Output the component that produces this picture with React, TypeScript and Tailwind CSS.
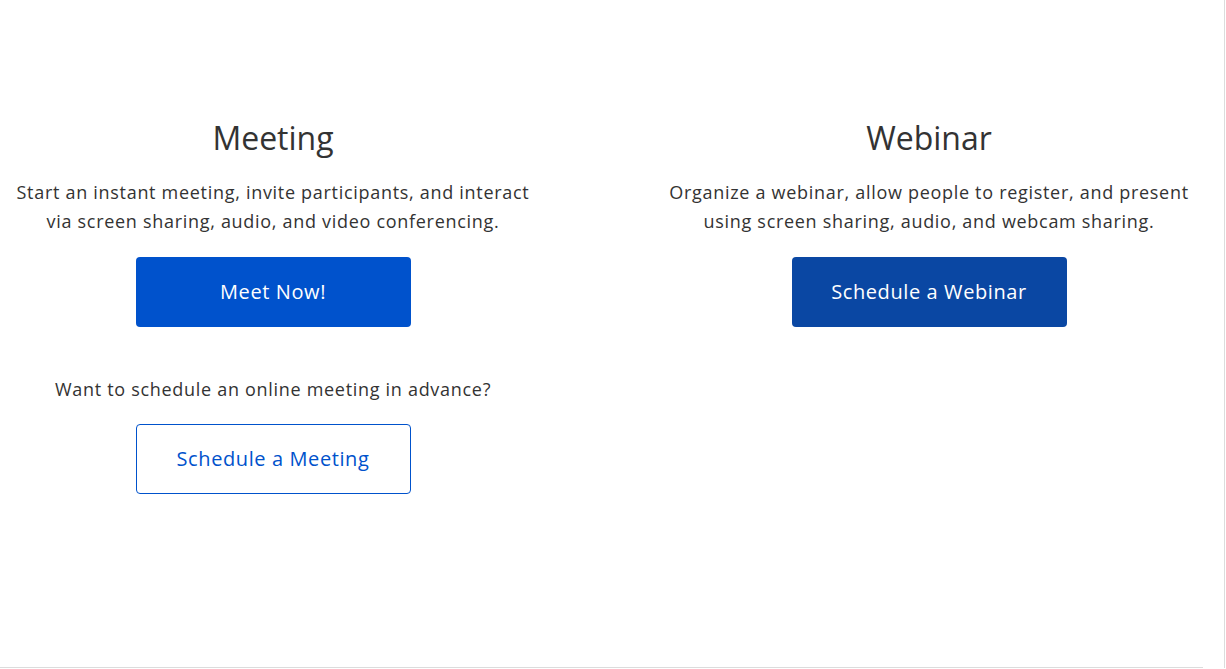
export default function App() {
  return (
    <div className="h-[669px] w-[1226px] bg-white" style={{ fontFamily: '"Open Sans", sans-serif' }}>
      <div className="flex h-[668px] w-[1225px] border-r border-[#dcdcdc]">
        <div className="flex h-full w-[1203px] flex-col border-b border-[#dcdcdc]">
          <div className="flex gap-[110px] pt-[119px] text-[#333333]">
            <div className="flex w-[546px] flex-col items-center text-center">
              <h1 className="text-[32px] leading-[38px]">Meeting</h1>
              <p className="mt-[21px] text-[18px] leading-[29px] tracking-[0.7px]">
                Start an instant meeting, invite participants, and interact
                <br />
                via screen sharing, audio, and video conferencing.
              </p>
              <button className="mt-[21px] h-[70px] w-[275px] rounded-[4px] bg-[#0052cc] text-[20px] tracking-[0.6px] text-white">
                Meet Now!
              </button>
              <p className="mt-[48px] text-[18px] leading-[29px] tracking-[0.7px]">Want to schedule an online meeting in advance?</p>
              <button className="mt-[20px] h-[70px] w-[275px] rounded-[4px] border border-[#0052cc] bg-white text-[20px] tracking-[0.6px] text-[#0052cc]">
                Schedule a Meeting
              </button>
            </div>
            <div className="flex w-[546px] flex-col items-center text-center">
              <h1 className="text-[32px] leading-[38px]">Webinar</h1>
              <p className="mt-[21px] text-[18px] leading-[29px] tracking-[0.7px]">
                Organize a webinar, allow people to register, and present
                <br />
                using screen sharing, audio, and webcam sharing.
              </p>
              <button className="mt-[21px] h-[70px] w-[275px] rounded-[4px] bg-[#0a47a3] text-[20px] tracking-[0.6px] text-white">
                Schedule a Webinar
              </button>
            </div>
          </div>
        </div>
      </div>
    </div>
  )
}
